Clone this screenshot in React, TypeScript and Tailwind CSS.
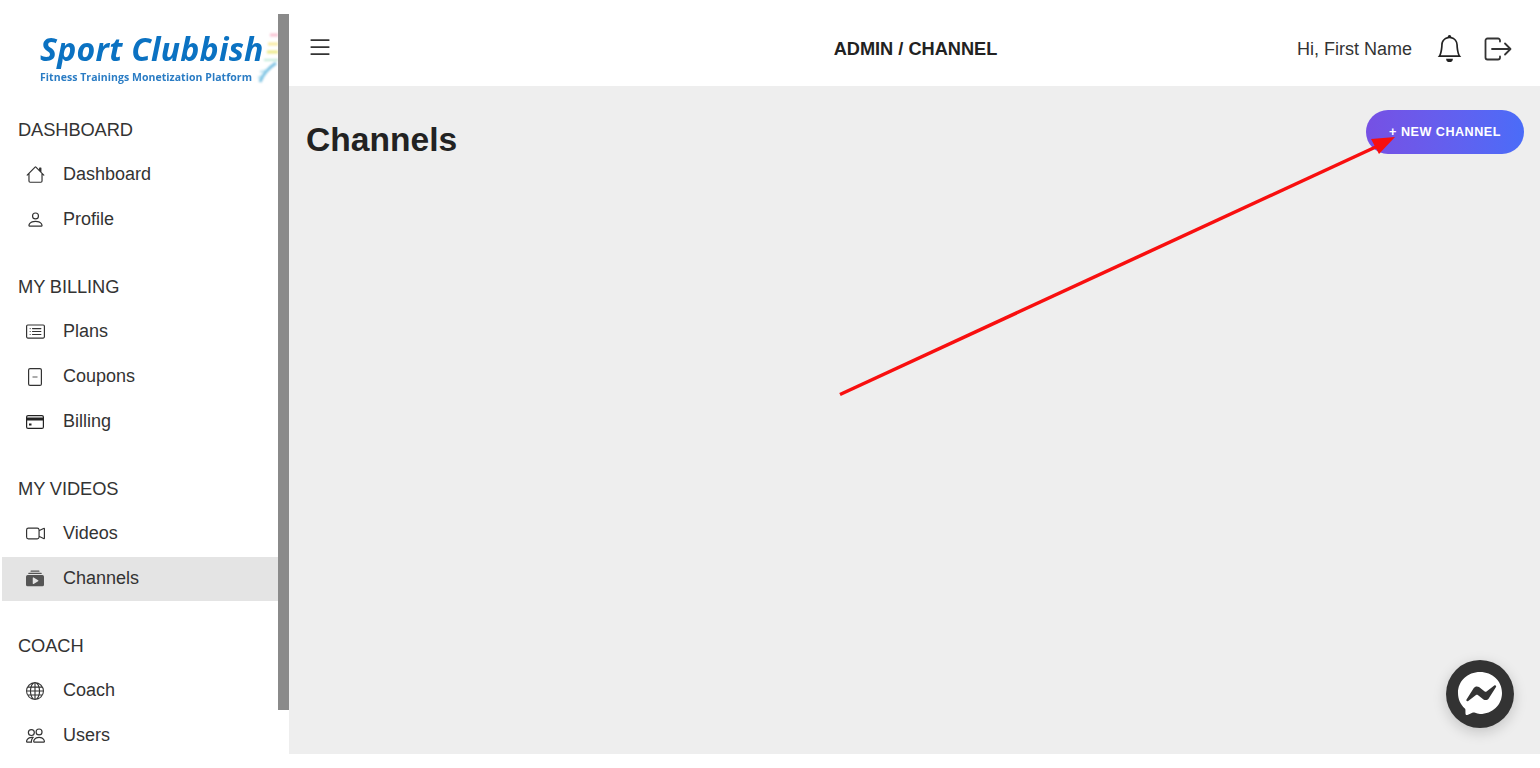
import { BsBell, BsCameraVideo, BsCardList, BsCollectionPlayFill, BsGlobe, BsHouse, BsList, BsPeople, BsPerson } from "react-icons/bs"

function CouponIcon() {
	return (
		<svg width="14" height="18" viewBox="0 0 14 18" fill="none" stroke="#333">
			<rect x="0.6" y="0.6" width="12.8" height="16.800" rx="1.5" strokeWidth="1.2" />
			<path d="M4.500 9h5" strokeWidth="1.400" stroke="#888" />
		</svg>
	)
}

function CardIcon() {
	return (
		<svg width="18" height="14" viewBox="0 0 18 14" fill="none">
			<rect x="0.6" y="0.6" width="16.8" height="12.8" rx="1.5" stroke="#222" strokeWidth="1.2" />
			<rect x="1" y="2.5" width="16" height="3" fill="#222" />
			<rect x="3" y="8.5" width="2.5" height="2" fill="#222" />
		</svg>
	)
}

function LogoutIcon() {
	return (
		<svg width="28" height="24" viewBox="0 0 28 24" fill="none" stroke="#333" strokeWidth="1.8" strokeLinecap="round" strokeLinejoin="round">
			<path d="M16 4.500V3.500a2 2 0 0 0-2-2H3.500a2 2 0 0 0-2 2v17a2 2 0 0 0 2 2H14a2 2 0 0 0 2-2v-1" />
			<path d="M8 12h18M21 6.500l5.500 5.500-5.500 5.500" />
		</svg>
	)
}

function Messenger() {
	return (
		<svg width="46" height="46" viewBox="0 0 46 46">
			<path d="M23 1C10.600 1 1 10 1 22c0 6.300 2.600 11.700 6.800 15.400.8.700.6 1.200.7 5.300.1 1 .9 1.600 1.900 1.200l5-2.200c.7-.3 1.300-.2 2-.1C19.600 42.500 21.300 43 23 43c12.400 0 22-9 22-21S35.400 1 23 1z" fill="#fff" />
			<path d="M9.500 28.500l7.300-11.400c1.100-1.800 3.500-2.200 5.200-1l5.700 4.300c.5.400 1.300.4 1.800 0l7.800-5.900c1-.8 2.400.4 1.700 1.500l-7.300 11.400c-1.100 1.800-3.500 2.200-5.200 1l-5.700-4.300c-.5-.4-1.300-.4-1.800 0l-7.800 5.900c-1 .8-2.400-.4-1.700-1.500z" fill="#333" />
		</svg>
	)
}

function Logo() {
	return (
		<div className="relative h-[108px] pt-[29px] pl-[40px] font-['Open_Sans',sans-serif] text-[#0b72c2]">
			<div className="whitespace-nowrap text-[32px] leading-[40px] font-bold tracking-[0.25px] italic blur-[0.4px]">Sport Clubbish</div>
			<div className="mt-[1px] whitespace-nowrap text-[10.5px] leading-[14px] font-bold tracking-[0.05px] text-[#2a7cc4] blur-[0.3px]">Fitness Trainings Monetization Platform</div>
			<svg className="absolute top-[32px] left-[256px] blur-[1px]" width="22" height="54" viewBox="0 0 22 54" fill="none">
				<path d="M14 3h8" stroke="#f7a8c0" strokeWidth="3" opacity="0.7" />
				<path d="M12 12h10" stroke="#f5e27a" strokeWidth="3" opacity="0.7" />
				<path d="M11 20h11" stroke="#e8e56a" strokeWidth="3" opacity="0.8" />
				<path d="M8 28h14" stroke="#9adcc0" strokeWidth="2" opacity="0.6" />
				<path d="M4 50c3-8 7-13 16-19" stroke="#5fb4dc" strokeWidth="3" opacity="0.8" />
				<path d="M4 40l8-2M2 46l6-3" stroke="#8fd0ea" strokeWidth="2" opacity="0.6" />
			</svg>
		</div>
	)
}

function Heading({ children, first }: { children: React.ReactNode; first?: boolean }) {
	return (
		<div className={`flex h-[44px] items-center pl-[18px] text-[18.3px] tracking-[-0.1px] text-[#333] ${first ? "" : "mt-[23px]"}`}>
			{children}
		</div>
	)
}

function Item({ icon, label, active }: { icon: React.ReactNode; label: string; active?: boolean }) {
	return (
		<div className={`ml-[2px] flex w-[276px] items-center text-[18px] text-[#333] ${active ? "mt-[1px] h-[44px] bg-[#e4e4e4]" : "h-[45px]"}`}>
			<span className="flex w-[61px] justify-center pl-[5px] text-[#333]">{icon}</span>
			<span className={active ? "pb-[1px]" : ""}>{label}</span>
		</div>
	)
}

export default function App() {
	return (
		<div className="relative flex h-[768px] w-[1540px] overflow-hidden bg-white font-['Liberation_Sans',Arial,sans-serif]">
			{/* Sidebar */}
			<aside className="h-full w-[289px] shrink-0">
				<Logo />
				<Heading first>DASHBOARD</Heading>
				<Item icon={<BsHouse size={19} />} label="Dashboard" />
				<Item icon={<BsPerson size={19} />} label="Profile" />
				<Heading>MY BILLING</Heading>
				<Item icon={<BsCardList size={19} />} label="Plans" />
				<Item icon={<CouponIcon />} label="Coupons" />
				<Item icon={<CardIcon />} label="Billing" />
				<Heading>MY VIDEOS</Heading>
				<Item icon={<BsCameraVideo size={19} />} label="Videos" />
				<Item active icon={<BsCollectionPlayFill size={18} className="text-[#555]" />} label="Channels" />
				<Heading>COACH</Heading>
				<Item icon={<BsGlobe size={18} />} label="Coach" />
				<Item icon={<BsPeople size={19} />} label="Users" />
			</aside>

			{/* Scrollbar thumb */}
			<div className="absolute top-[14px] left-[278px] h-[696px] w-[11px] bg-[#8a8a8a]" />

			<main className="flex h-full flex-1 flex-col">
				<header className="flex h-[86px] items-center pt-[12px] pr-[28px] pl-[17px]">
					<BsList size={28} className="mt-[-4px] text-[#333]" />
					<div className="flex-1 pt-[1px] pl-[200px] text-center text-[18.2px] font-bold text-[#222]">ADMIN / CHANNEL</div>
					<span className="text-[18px] text-[#333]">Hi, First Name</span>
					<BsBell size={27} className="mt-[-2px] ml-[24px] text-[#222]" />
					<span className="ml-[21px]"><LogoutIcon /></span>
				</header>

				<section className="h-[668px] bg-[#eeeeee] pt-[24px] pr-[16px] pl-[17px]">
					<div className="flex items-start justify-between">
						<h1 className="pt-[8px] text-[33.6px] leading-[44px] font-bold text-[#222]">Channels</h1>
						<button type="button" className="h-[44px] w-[158px] rounded-[22px] bg-gradient-to-r from-[#7650e4] to-[#4a6cf8] text-[12.6px] font-bold tracking-[0.5px] text-white">
							+ NEW CHANNEL
						</button>
					</div>
				</section>
			</main>

			{/* Annotation arrow */}
			<svg className="absolute top-0 left-0" width="1540" height="768" fill="none">
				<path d="M840 394.500L1380 145" stroke="#f80f0f" strokeWidth="3.500" />
				<path d="M1395 137L1371 139L1379 154Z" fill="#f80f0f" />
			</svg>

			{/* Chat bubble */}
			<div className="absolute top-[660px] left-[1446px] flex h-[68px] w-[68px] items-center justify-center rounded-full bg-[#333] shadow-[0_4px_14px_rgba(0,0,0,0.18)]">
				<Messenger />
			</div>
		</div>
	)
}
